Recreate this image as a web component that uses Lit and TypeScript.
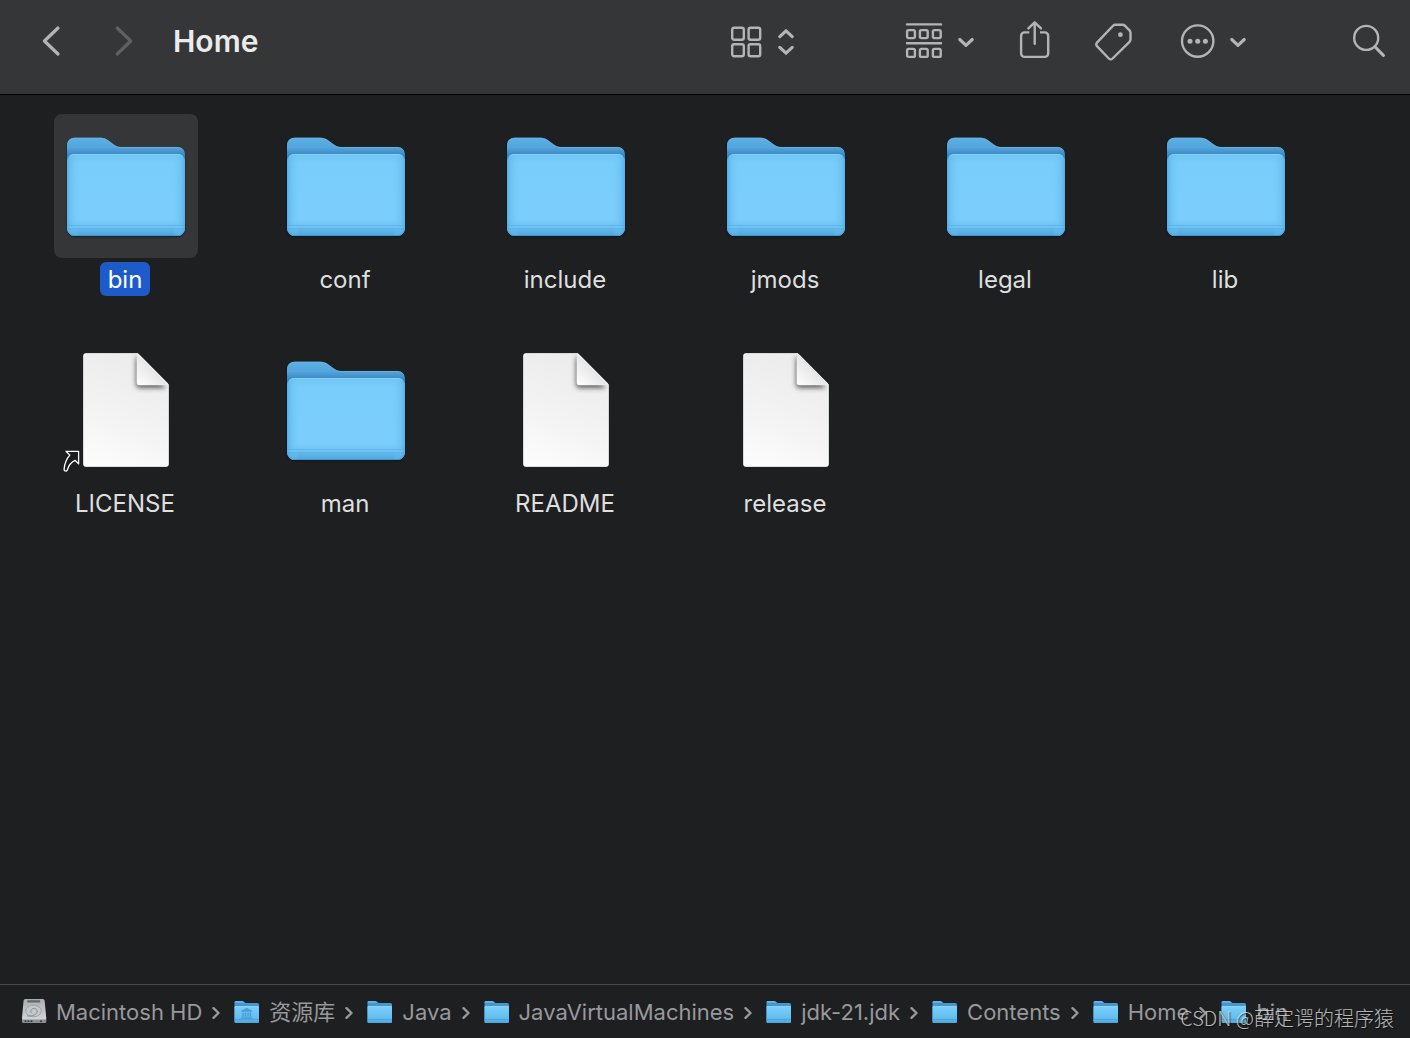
import { LitElement, html, css, svg } from "lit";
import { customElement, property, state } from "lit/decorators.js";
import { classMap } from "lit/directives/class-map.js";

type Kind = "folder" | "document" | "alias";

interface Entry {
  name: string;
  kind: Kind;
}

interface Crumb {
  name: string;
  icon: "disk" | "folder" | "library";
}

const ENTRIES: Entry[] = [
  { name: "bin", kind: "folder" },
  { name: "conf", kind: "folder" },
  { name: "include", kind: "folder" },
  { name: "jmods", kind: "folder" },
  { name: "legal", kind: "folder" },
  { name: "lib", kind: "folder" },
  { name: "LICENSE", kind: "alias" },
  { name: "man", kind: "folder" },
  { name: "README", kind: "document" },
  { name: "release", kind: "document" },
];

const CRUMBS: Crumb[] = [
  { name: "Macintosh HD", icon: "disk" },
  { name: "资源库", icon: "library" },
  { name: "Java", icon: "folder" },
  { name: "JavaVirtualMachines", icon: "folder" },
  { name: "jdk-21.jdk", icon: "folder" },
  { name: "Contents", icon: "folder" },
  { name: "Home", icon: "folder" },
  { name: "bin", icon: "folder" },
];

/** Large icon for a folder, a document or an alias to a document. */
@customElement("file-icon")
export class FileIcon extends LitElement {
  @property() kind: Kind = "folder";

  static styles = css`
    :host {
      display: block;
    }
    svg {
      display: block;
      width: 128px;
      height: 128px;
      overflow: visible;
    }
  `;

  private folder() {
    return svg`
      <defs>
        <linearGradient id="back" x1="0" y1="15" x2="0" y2="34" gradientUnits="userSpaceOnUse">
          <stop offset="0" stop-color="#5db1e4" />
          <stop offset="0.55" stop-color="#54a5dc" />
          <stop offset="1" stop-color="#3683c0" />
        </linearGradient>
        <linearGradient id="side" x1="5" y1="0" x2="123" y2="0" gradientUnits="userSpaceOnUse">
          <stop offset="0" stop-color="#4aa5de" stop-opacity="0.75" />
          <stop offset="0.03" stop-color="#5fb9ee" stop-opacity="0.6" />
          <stop offset="0.11" stop-color="#7bcefb" stop-opacity="0" />
          <stop offset="0.89" stop-color="#7bcefb" stop-opacity="0" />
          <stop offset="0.97" stop-color="#5fb9ee" stop-opacity="0.6" />
          <stop offset="1" stop-color="#4aa5de" stop-opacity="0.75" />
        </linearGradient>
        <linearGradient id="front" x1="0" y1="32" x2="0" y2="114" gradientUnits="userSpaceOnUse">
          <stop offset="0" stop-color="#6fc4f5" />
          <stop offset="0.1" stop-color="#79cdfa" />
          <stop offset="0.8" stop-color="#7bcefb" />
          <stop offset="0.87" stop-color="#70c5f5" />
          <stop offset="0.93" stop-color="#5fb5ea" />
          <stop offset="1" stop-color="#4ba3da" />
        </linearGradient>
        <filter id="drop" x="-10%" y="-10%" width="120%" height="125%">
          <feDropShadow dx="0" dy="1" stdDeviation="1" flood-color="#000" flood-opacity="0.5" />
        </filter>
      </defs>
      <path filter="url(#drop)" fill="url(#back)"
        d="M5 23.500c0-5 3-7.800 8-7.800h25c4 0 6 1 9 3.300l3 2.300c3 2.400 5 3.700 9 3.700h56c5 0 8 3 8 8v73a8 8 0 0 1-8 8H13a8 8 0 0 1-8-8z" />
      <path fill="none" stroke="#71bfeb" stroke-opacity="0.6" stroke-width="0.8"
        d="M7 19c1-2 3-2.900 6-2.900h25c4 0 6 1 9 3.300l3 2.300c3 2.400 5 3.700 9 3.700h56c3 0 5 1 6.500 3" />
      <rect x="5" y="32" width="118" height="82" rx="8" fill="url(#front)" />
      <rect x="5" y="32" width="118" height="82" rx="8" fill="url(#side)" />
      <path d="M7 34.500c1.500-1.400 3-2 6-2h102c3 0 4.500.6 6 2" fill="none" stroke="#8bd5fb" stroke-opacity="0.7" />
      <path d="M5.500 103.500h117M5.500 107h117" stroke="#4ea6dc" stroke-opacity="0.4" />
      <path d="M5.500 105h117" stroke="#7fcdf8" stroke-opacity="0.35" />
      <path d="M7 110.500c1.500 2.200 3 3 6 3h102c3 0 4.500-.8 6-3" fill="none" stroke="#3d8fc8" stroke-opacity="0.8" stroke-width="0.8" />
    `;
  }

  private sheet() {
    return svg`
      <defs>
        <linearGradient id="paper" x1="80" y1="8" x2="36" y2="120" gradientUnits="userSpaceOnUse">
          <stop offset="0" stop-color="#ebebeb" />
          <stop offset="0.5" stop-color="#f2f2f2" />
          <stop offset="1" stop-color="#fcfcfc" />
        </linearGradient>
        <linearGradient id="fold" x1="75" y1="39" x2="92" y2="22" gradientUnits="userSpaceOnUse">
          <stop offset="0" stop-color="#ffffff" />
          <stop offset="1" stop-color="#e4e4e4" />
        </linearGradient>
        <clipPath id="edge">
          <path d="M24 7.300h50.700a4 4 0 0 1 2.600 1.200l28 28.200a4 4 0 0 1 1.400 2.800V118a2.700 2.700 0 0 1-2.700 2.700H24a2.700 2.700 0 0 1-2.700-2.700V10A2.700 2.700 0 0 1 24 7.300z" />
        </clipPath>
        <filter id="soft" x="-40%" y="-40%" width="180%" height="180%">
          <feGaussianBlur stdDeviation="2.600" />
        </filter>
      </defs>
      <g clip-path="url(#edge)">
        <rect x="21" y="7" width="86" height="114" fill="url(#paper)" />
        <path d="M74 13v25a4 4 0 0 0 4 4h26L76 10z" fill="#000" fill-opacity="0.6" filter="url(#soft)" />
        <path d="M74.700 6v30.600a2.700 2.700 0 0 0 2.700 2.700H108z" fill="url(#fold)" />
      </g>
      <path fill="none" stroke="#fff" stroke-opacity="0.7" stroke-width="0.8"
        d="M24 7.700h50.700a4 4 0 0 1 2.300 1.200l28 28.200a4 4 0 0 1 1.300 2.400V118a2.300 2.300 0 0 1-2.300 2.300H24a2.300 2.300 0 0 1-2.300-2.300V10A2.300 2.300 0 0 1 24 7.700z" />
    `;
  }

  private aliasArrow() {
    return svg`
      <path fill="#1c1d1f" stroke="#fff" stroke-width="1.300" stroke-linejoin="round"
        d="M4 105.300h12.600v12.600l-3.600-3.600c-3.600 1.800-6.300 4.800-7.600 9.400-.3 1.200-1.200 1.600-2.200 1.300-.9-.3-1.200-1-1.100-2 .6-6 2.500-10.400 5.700-13.900z" />
    `;
  }

  render() {
    return html`<svg viewBox="0 0 128 128" aria-hidden="true">
      ${this.kind === "folder" ? this.folder() : this.sheet()}
      ${this.kind === "alias" ? this.aliasArrow() : null}
    </svg>`;
  }
}

/** Small icon used in the path bar. */
@customElement("crumb-icon")
export class CrumbIcon extends LitElement {
  @property() icon: Crumb["icon"] = "folder";

  static styles = css`
    :host {
      display: block;
    }
    svg {
      display: block;
      width: 28px;
      height: 28px;
    }
  `;

  private folder() {
    return svg`
      <defs>
        <linearGradient id="front" x1="0" y1="8" x2="0" y2="25" gradientUnits="userSpaceOnUse">
          <stop offset="0" stop-color="#7bcffb" />
          <stop offset="0.7" stop-color="#64bdf0" />
          <stop offset="1" stop-color="#4ca5dd" />
        </linearGradient>
      </defs>
      <path fill="#4595cf" d="M1.500 4.500A1.500 1.500 0 0 1 3 3h6c1.600 0 2.600 2 4.200 2h11.300A1.500 1.500 0 0 1 26 6.500v17a1.500 1.500 0 0 1-1.500 1.500H3a1.500 1.500 0 0 1-1.500-1.500z" />
      <path fill="#62b6e8" d="M1.500 4.500A1.500 1.500 0 0 1 3 3h6c1.300 0 2.100 1.200 3 1.700H1.500z" />
      <rect x="1.500" y="8" width="24.500" height="17" rx="1.300" fill="url(#front)" />
      <path d="M1.500 21.500H26" stroke="#4396ce" stroke-opacity="0.6" />
      <path d="M2 8.500h23.500" stroke="#8ad6fc" stroke-opacity="0.8" />
    `;
  }

  private columns() {
    return svg`
      <g fill="#3b8fca" fill-opacity="0.75">
        <path d="M13.700 9.800l5.600 3v1H8.100v-1z" />
        <path d="M9.300 14.500h1.500v4.200H9.300zM11.800 14.500h1.400v4.200h-1.400zM14.300 14.500h1.400v4.200h-1.400zM16.700 14.500h1.500v4.200h-1.500zM8.100 19.200h11.200v1.500H8.100z" />
      </g>
    `;
  }

  private disk() {
    return svg`
      <defs>
        <linearGradient id="metal" x1="0" y1="1" x2="0" y2="22" gradientUnits="userSpaceOnUse">
          <stop offset="0" stop-color="#a9aeb1" />
          <stop offset="1" stop-color="#d3d6d8" />
        </linearGradient>
      </defs>
      <path fill="#8b8e90" d="M2 20.500h24.300v3.300a1.300 1.300 0 0 1-1.300 1.300H3.300A1.300 1.300 0 0 1 2 23.800z" />
      <path fill="url(#metal)" d="M5.300 1h17.500a1.800 1.800 0 0 1 1.800 1.500L26.300 20a1.500 1.500 0 0 1-1.500 1.600H3.500A1.500 1.500 0 0 1 2 20L3.600 2.500A1.800 1.800 0 0 1 5.300 1z" />
      <path fill="#63686b" d="M7.500 2.200H20l.3 2.200H7.200z" />
      <ellipse cx="13.500" cy="13" rx="7.800" ry="5.800" fill="#c3c8ca" stroke="#9ba1a4" stroke-width="0.900" />
      <path d="M11.300 14.800c-1.600-2.600 1.200-5 3.900-4.200 2.400.8 2.600 3.600.8 5.300-2 1.800-5.400 2.400-9 2" fill="none" stroke="#8a9093" stroke-width="1" />
      <path d="M5.500 22.600v1.500M8.500 22.600v1.500M11.500 22.600v1.500M21 22.600v1.500" stroke="#2b2d2f" stroke-width="1.600" />
    `;
  }

  render() {
    return html`<svg viewBox="0 0 28 28" aria-hidden="true">
      ${this.icon === "disk" ? this.disk() : this.folder()}
      ${this.icon === "library" ? this.columns() : null}
    </svg>`;
  }
}

@customElement("app-root")
export class AppRoot extends LitElement {
  @state() private selected = "bin";

  static styles = css`
    :host {
      display: flex;
      flex-direction: column;
      position: relative;
      min-height: 100vh;
      background: #1e1f21;
      color: #dfdfdf;
      font-family: Inter, "Noto Sans CJK SC", sans-serif;
      overflow: hidden;
    }
    button {
      margin: 0;
      padding: 0;
      border: 0;
      background: none;
      color: inherit;
      font: inherit;
    }
    .toolbar {
      display: flex;
      align-items: center;
      justify-content: space-between;
      padding: 19px 24px 31px 41px;
      background: #353638;
      border-bottom: 1px solid #000;
    }
    .nav,
    .tools {
      display: flex;
      align-items: center;
    }
    .nav {
      gap: 53px;
    }
    .tools {
      gap: 44px;
      color: #b4b4b6;
    }
    .tool svg {
      display: block;
      height: 44px;
      fill: none;
      stroke: currentColor;
      stroke-width: 2.4;
      stroke-linecap: round;
      stroke-linejoin: round;
    }
    .tool .bold {
      stroke-width: 3.2;
    }
    .tool .solid {
      fill: currentColor;
      stroke: none;
    }
    .back {
      color: #b4b4b6;
    }
    .forward {
      color: #5f6062;
    }
    .view {
      margin-right: 64px;
    }
    .search {
      margin-left: 60px;
    }
    .title {
      margin: 0 0 0 -14px;
      color: #ebebeb;
      font-size: 30px;
      line-height: 44px;
      font-weight: 600;
    }
    .files {
      flex: 1;
      display: grid;
      grid-template-columns: repeat(auto-fill, 144px);
      align-content: start;
      gap: 42px 76px;
      margin: 0;
      padding: 19px 54px;
      list-style: none;
    }
    .file {
      display: flex;
      flex-direction: column;
      align-items: center;
      gap: 4px;
      width: 100%;
    }
    .thumb {
      padding: 8px;
      border-radius: 8px;
    }
    .name {
      margin-right: 2px;
      padding: 2px 8px 0;
      border-radius: 6px;
      font-size: 24px;
      line-height: 32px;
    }
    .selected .thumb {
      background: #353638;
    }
    .selected .name {
      background: #1d5bcb;
      color: #fff;
    }
    .path {
      border-top: 1px solid #48494b;
      color: #98999b;
    }
    .crumbs {
      display: flex;
      align-items: center;
      margin: 0;
      padding: 0 20px;
      list-style: none;
      white-space: nowrap;
    }
    .step {
      display: flex;
      align-items: center;
    }
    .crumb {
      display: flex;
      align-items: center;
      gap: 8px;
      color: inherit;
      text-decoration: none;
      font-size: 22px;
      line-height: 53px;
    }
    .label {
      padding-top: 2px;
      line-height: 51px;
    }
    .arrow {
      width: 8px;
      height: 14px;
      margin: 2px 13px 0 10px;
      fill: none;
      stroke: currentColor;
      stroke-width: 2.4;
      stroke-linecap: round;
      stroke-linejoin: round;
    }
    .watermark {
      position: absolute;
      right: 16px;
      bottom: 5px;
      color: rgba(225, 225, 225, 0.8);
      font-family: "Noto Sans CJK SC", sans-serif;
      font-size: 20px;
      font-weight: 300;
      line-height: 30px;
      text-shadow: 1px 1px 1px rgba(0, 0, 0, 0.6);
      pointer-events: none;
    }
  `;

  private renderToolbar() {
    return html`<header class="toolbar">
      <nav class="nav" aria-label="History">
        <button class="tool back" aria-label="Back">
          <svg width="20" viewBox="0 0 20 44"><path class="bold" d="M17 9L3.400 22 17 35" /></svg>
        </button>
        <button class="tool forward" aria-label="Forward" disabled>
          <svg width="20" viewBox="0 0 20 44"><path class="bold" d="M3.200 9l13.600 13L3.200 35" /></svg>
        </button>
        <h1 class="title">Home</h1>
      </nav>
      <div class="tools">
        <button class="tool view" aria-label="View as icons">
          <svg width="67" viewBox="0 0 67 44">
            <rect x="2.200" y="8.800" width="11.600" height="12" rx="2" />
            <rect x="18.600" y="8.800" width="11.600" height="12" rx="2" />
            <rect x="2.200" y="25.200" width="11.600" height="12" rx="2" />
            <rect x="18.600" y="25.200" width="11.600" height="12" rx="2" />
            <path class="bold" d="M49.800 17.600L56 11.800l6.200 5.800M49.800 28.400L56 34.200l6.200-5.800" />
          </svg>
        </button>
        <button class="tool" aria-label="Group items">
          <svg width="70" viewBox="0 0 70 44">
            <path d="M2 5.400h34M2 24.300h34" />
            <rect x="2.100" y="11.100" width="7.800" height="8" rx="1.500" />
            <rect x="14.900" y="11.100" width="7.800" height="8" rx="1.500" />
            <rect x="27.900" y="11.100" width="7.800" height="8" rx="1.500" />
            <rect x="2.100" y="29.900" width="7.800" height="8" rx="1.500" />
            <rect x="14.900" y="29.900" width="7.800" height="8" rx="1.500" />
            <rect x="27.900" y="29.900" width="7.800" height="8" rx="1.500" />
            <path class="bold" d="M54.800 20.500L61 26.300l6.200-5.800" />
          </svg>
        </button>
        <button class="tool" aria-label="Share">
          <svg width="32" viewBox="0 0 32 44">
            <path stroke-linecap="butt" d="M10.300 13.400H5.600a3.500 3.500 0 0 0-3.500 3.500v17.500a3.500 3.500 0 0 0 3.500 3.500h20.100a3.500 3.500 0 0 0 3.500-3.500V16.900a3.500 3.500 0 0 0-3.500-3.500H21" />
            <path d="M15.700 3.500v21.300M9.400 9.400l6.300-6.100L22 9.400" />
          </svg>
        </button>
        <button class="tool" aria-label="Tags">
          <svg width="38" viewBox="0 0 38 44">
            <path d="M18.300 6.500c.7-.7 1.200-.8 2-.8h7.300c1 0 1.600.3 2.200.9l4.700 4.800c.7.7 1 1.300 1 2.200v7c0 .9-.3 1.500-1 2.200L17.600 39.500c-1.200 1.200-2.600 1.200-3.800 0L2.200 27.400c-1.200-1.300-1.200-2.700 0-4z" />
            <circle class="solid" cx="25.400" cy="15.700" r="2.400" />
          </svg>
        </button>
        <button class="tool" aria-label="More actions">
          <svg width="71" viewBox="0 0 71 44">
            <circle cx="20.700" cy="22.100" r="15.700" />
            <circle class="solid" cx="13" cy="22.200" r="2.500" />
            <circle class="solid" cx="20.700" cy="22.200" r="2.500" />
            <circle class="solid" cx="28.400" cy="22.200" r="2.500" />
            <path class="bold" d="M54.800 20.500L61 26.300l6.200-5.800" />
          </svg>
        </button>
        <button class="tool search" aria-label="Search">
          <svg width="34" viewBox="0 0 34 44">
            <circle cx="14.200" cy="18.900" r="12" />
            <path class="bold" d="M23.200 28l8.200 8.300" />
          </svg>
        </button>
      </div>
    </header>`;
  }

  private renderEntry(entry: Entry) {
    const selected = entry.name === this.selected;
    return html`<li>
      <button
        class=${classMap({ file: true, selected })}
        aria-pressed=${selected ? "true" : "false"}
        @click=${() => (this.selected = entry.name)}
      >
        <span class="thumb"><file-icon .kind=${entry.kind}></file-icon></span>
        <span class="name">${entry.name}</span>
      </button>
    </li>`;
  }

  private renderCrumb(crumb: Crumb, index: number) {
    return html`<li class="step">
      ${index > 0
        ? html`<svg class="arrow" viewBox="0 0 8 14" aria-hidden="true"><path d="M1.500 2.200L6.500 7l-5 4.800" /></svg>`
        : null}
      <a class="crumb" href="#">
        <crumb-icon .icon=${crumb.icon}></crumb-icon>
        <span class="label">${crumb.name}</span>
      </a>
    </li>`;
  }

  render() {
    return html`
      ${this.renderToolbar()}
      <ul class="files">
        ${ENTRIES.map((entry) => this.renderEntry(entry))}
      </ul>
      <nav class="path" aria-label="Path">
        <ol class="crumbs">
          ${CRUMBS.map((crumb, index) => this.renderCrumb(crumb, index))}
        </ol>
      </nav>
      <div class="watermark">CSDN @薛定谔的程序猿</div>
    `;
  }
}
